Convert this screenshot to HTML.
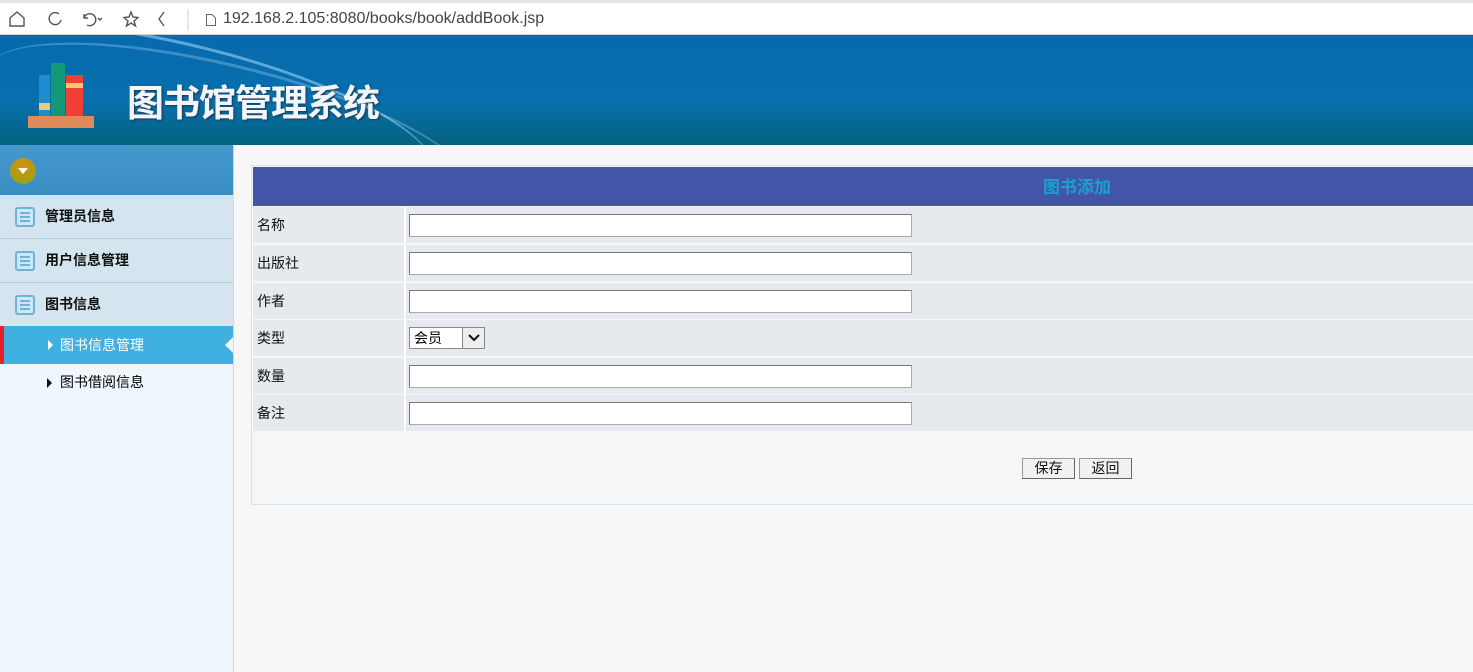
<!DOCTYPE html>
<html><head><meta charset="utf-8"><style>
*{margin:0;padding:0;box-sizing:border-box}
body{width:1473px;height:672px;overflow:hidden;background:#f7f7f7;font-family:"Liberation Sans","Noto Sans CJK SC",sans-serif;font-size:14px;position:relative}
.bar{position:absolute;left:0;top:0;width:1473px;height:35px;background:#fff;border-top:3px solid #e4e4e8;border-bottom:1px solid #d0d0d0}
.url{position:absolute;left:223px;top:7px;font-size:16px;color:#444}
.hdr{position:absolute;left:0;top:35px;width:1473px;height:110px;background:linear-gradient(#0769ae 0%,#0770ad 60%,#06637f 100%);overflow:hidden}
.glow{position:absolute;left:-60px;top:10px;width:500px;height:130px;border-radius:50%;border-top:3px solid rgba(180,230,255,.5);transform:rotate(14deg)}
.title{position:absolute;left:127px;top:38px;font-size:37px;font-weight:bold;color:#f2f6fa;letter-spacing:-1px;text-shadow:1px 1px 2px #234}
.side{position:absolute;left:0;top:145px;width:234px;height:527px;background:#eff7fd;border-right:1px solid #c5d8e6}
.stop{height:50px;background:linear-gradient(#4498cc,#3a8ec4)}
.ball{position:absolute;left:10px;top:13px;width:26px;height:26px;border-radius:50%;background:radial-gradient(circle at 50% 30%,#d88f10,#8aa818)}
.ball:after{content:"";position:absolute;left:8px;top:10px;border-left:5px solid transparent;border-right:5px solid transparent;border-top:6px solid #fff}
.mi{height:44px;background:#d4e5f0;border-bottom:1px solid #b8cfdd;position:relative;font-weight:bold;font-size:14px;line-height:43px;padding-left:45px;color:#111}
.mi i{position:absolute;left:15px;top:12px;width:20px;height:20px;border:2px solid #6fb2da;border-radius:3px;background:#cfe6f5}
.mi i:after{content:"";position:absolute;left:3px;top:3px;width:10px;height:10px;background:repeating-linear-gradient(#6fb2da 0 2px,transparent 2px 4px)}
.act{height:38px;background:#3fb0e0;border-left:4px solid #e8202a;color:#fff;line-height:38px;padding-left:56px;position:relative}
.sub{height:37px;line-height:37px;padding-left:60px;position:relative}
.tri{position:absolute;left:47px;top:14px;border-top:5px solid transparent;border-bottom:5px solid transparent;border-left:5px solid #111}
.act .tri{left:44px;border-left-color:#fff}
.act:after{content:"";position:absolute;right:0;top:11px;border-top:8px solid transparent;border-bottom:8px solid transparent;border-right:8px solid #eff7fd}
.box{position:absolute;left:251px;top:165px;width:1660px;height:340px;background:#f5f6f8;border:1px solid #d6e2ec;border-right:none}
.th{position:absolute;left:1px;top:1px;width:1648px;height:39px;background:#4455a8;color:#1aa0d0;font-weight:bold;font-size:17px;text-align:center;line-height:42px}
.row{position:absolute;left:1px;right:0;height:36px;background:#e6e9ee}
.row b{font-weight:normal;position:absolute;left:4px;top:8px;color:#111}
.row .sep{position:absolute;left:151px;top:0;width:2px;height:100%;background:#fff}
.inp{position:absolute;left:156px;top:7px;width:503px;height:23px;background:#fff;border:1px solid #aaa;border-top-color:#777;border-left-color:#777}
.sel{position:absolute;left:156px;top:7px;width:76px;height:22px;background:#fff;border:1px solid #888;font-size:14px;padding-left:4px;line-height:20px}
.sel span{position:absolute;right:0;top:0;width:22px;height:20px;background:#eee;border-left:1px solid #888}
.btn{position:absolute;top:292px;width:53px;height:21px;background:#f1f1f1;border:1px solid #999;border-right-color:#666;border-bottom-color:#666;text-align:center;font-size:14px;line-height:19px;color:#111}
</style></head><body>
<div class="bar">
<svg width="190" height="30" style="position:absolute;left:0;top:2px" fill="none" stroke="#555" stroke-width="1.4">
<path d="M10 13 L17 7 L24 13 V21 H10 Z"/>
<path d="M59 9 A6 6 0 1 0 61 15"/>
<path d="M84 9 V13 H88 M84 13 A6 6 0 1 1 87 20"/><path d="M98 13 l2 2 2-2"/>
<path d="M131 7 l2 5 5 .5 -4 3.5 1.5 5 -4.5 -3 -4.5 3 1.5 -5 -4 -3.5 5 -.5 z"/>
<path d="M164 7 l-5 7 5 7"/><path d="M188 4 V26" stroke="#ddd"/></svg>
<svg width="12" height="14" style="position:absolute;left:205px;top:10px" fill="none" stroke="#666"><path d="M1.5 1.5 H7 L10.5 5 V12.5 H1.5Z"/></svg>
<div class="url">192.168.2.105:8080/books/book/addBook.jsp</div></div>
<div class="hdr"><div class="glow"></div><div class="glow" style="top:30px;left:-20px;opacity:.6"></div>
<div style="position:absolute;left:39px;top:40px;width:11px;height:42px;background:#1d8fd0"></div>
<div style="position:absolute;left:39px;top:68px;width:11px;height:7px;background:#f8c670"></div>
<div style="position:absolute;left:51px;top:28px;width:14px;height:54px;background:#13987a"></div>
<div style="position:absolute;left:66px;top:40px;width:17px;height:42px;background:#ee4036"></div>
<div style="position:absolute;left:66px;top:48px;width:17px;height:5px;background:#f8c670"></div>
<div style="position:absolute;left:28px;top:81px;width:66px;height:12px;background:#e08a58"></div>
<div class="title">图书馆管理系统</div></div>
<div class="side"><div class="stop" style="position:relative"><div class="ball"></div></div>
<div class="mi"><i></i>管理员信息</div>
<div class="mi"><i></i>用户信息管理</div>
<div class="mi" style="border-bottom:none;height:43px"><i></i>图书信息</div>
<div class="act"><span class="tri"></span>图书信息管理</div>
<div class="sub"><span class="tri"></span>图书借阅信息</div></div>
<div class="box"><div class="th">图书添加</div>
<div class="row" style="top:41px"><b>名称</b><div class="sep"></div><div class="inp"></div></div>
<div class="row" style="top:79px"><b>出版社</b><div class="sep"></div><div class="inp"></div></div>
<div class="row" style="top:117px"><b>作者</b><div class="sep"></div><div class="inp"></div></div>
<div class="row" style="top:154px"><b>类型</b><div class="sep"></div><div class="sel">会员<span><svg width="22" height="20" fill="none" stroke="#111" stroke-width="2"><path d="M6 7 l5 5 5-5"/></svg></span></div></div>
<div class="row" style="top:192px"><b>数量</b><div class="sep"></div><div class="inp"></div></div>
<div class="row" style="top:229px"><b>备注</b><div class="sep"></div><div class="inp"></div></div>
<div class="btn" style="left:770px">保存</div><div class="btn" style="left:827px">返回</div>
</div>
</body></html>
